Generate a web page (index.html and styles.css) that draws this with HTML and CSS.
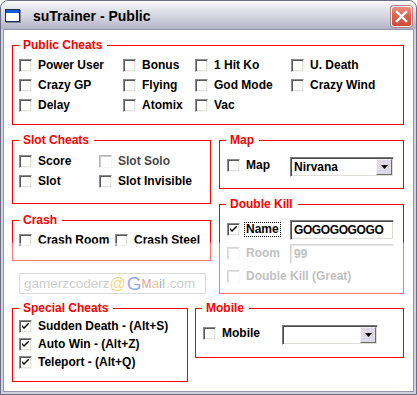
FILE: index.html
```html
<!DOCTYPE html>
<html>
<head>
<meta charset="utf-8">
<title>suTrainer - Public</title>
<link rel="stylesheet" href="styles.css">
</head>
<body>
<div class="window">
  <div class="titlebar">
    <svg class="appicon" width="16" height="14" viewBox="0 0 16 14">
      <rect x="0.5" y="0.5" width="14" height="12" fill="#fff" stroke="#1c2c5c"/>
      <rect x="1" y="1" width="13" height="3" fill="#1a5ad8"/>
      <rect x="15" y="1" width="1" height="13" fill="#808090"/>
      <rect x="1" y="13" width="15" height="1" fill="#808090"/>
    </svg>
    <span class="title">suTrainer - Public</span>
    <div class="close">
      <svg width="13" height="13" viewBox="0 0 13 13"><path d="M2 2 L11 11 M11 2 L2 11" stroke="#fff" stroke-width="2.4" stroke-linecap="square"/></svg>
    </div>
  </div>
  <div class="client">
    <fieldset class="grp public">
      <legend>Public Cheats</legend>
      <div class="body grid-public">
        <label class="opt"><span class="cb"></span>Power User</label>
        <label class="opt"><span class="cb"></span>Bonus</label>
        <label class="opt"><span class="cb"></span>1 Hit Ko</label>
        <label class="opt"><span class="cb"></span>U. Death</label>
        <label class="opt"><span class="cb"></span>Crazy GP</label>
        <label class="opt"><span class="cb"></span>Flying</label>
        <label class="opt"><span class="cb"></span>God Mode</label>
        <label class="opt"><span class="cb"></span>Crazy Wind</label>
        <label class="opt"><span class="cb"></span>Delay</label>
        <label class="opt"><span class="cb"></span>Atomix</label>
        <label class="opt"><span class="cb"></span>Vac</label>
      </div>
    </fieldset>

    <div class="middle">
      <div class="col left">
        <fieldset class="grp slot">
          <legend>Slot Cheats</legend>
          <div class="body grid-slot">
            <label class="opt"><span class="cb"></span>Score</label>
            <label class="opt dim"><span class="cb off"></span>Slot Solo</label>
            <label class="opt"><span class="cb"></span>Slot</label>
            <label class="opt"><span class="cb"></span>Slot Invisible</label>
          </div>
        </fieldset>
        <fieldset class="grp crash">
          <legend>Crash</legend>
          <div class="body grid-crash">
            <label class="opt"><span class="cb"></span>Crash Room</label>
            <label class="opt"><span class="cb"></span>Crash Steel</label>
          </div>
        </fieldset>
        <div class="watermark">
          <span class="wm-name">gamerzcoderz</span><span class="wm-at">@</span><span class="wm-g">G</span><span class="wm-m">M</span><span class="wm-a">a</span><span class="wm-i">i</span><span class="wm-l">l</span><span class="wm-com">.com</span>
        </div>
      </div>
      <div class="col right">
        <fieldset class="grp map">
          <legend>Map</legend>
          <div class="body rowwrap">
            <div class="opt line">
              <span class="cb"></span><span class="lbl w44">Map</span>
              <div class="combo w104"><span class="combo-text">Nirvana</span><span class="combo-btn"><svg width="7" height="4" viewBox="0 0 7 4"><path d="M0 0 H7 L3.5 4 Z" fill="#000"/></svg></span></div>
            </div>
          </div>
        </fieldset>
        <fieldset class="grp dk">
          <legend>Double Kill</legend>
          <div class="body dkrows">
            <div class="opt line">
              <span class="cb"><svg width="7" height="7" viewBox="0 0 7 7"><path d="M0 2 L2 4 L7 -1 L7 1 L2 6 L0 4 Z" fill="#000"/></svg></span><span class="lbl w44"><span class="focus">Name</span></span>
              <div class="edit w104">GOGOGOGOGO</div>
            </div>
            <div class="opt line dis r2">
              <span class="cb off"></span><span class="lbl w44">Room</span>
              <div class="edit w104 disabled">99</div>
            </div>
            <div class="opt line dis r3">
              <span class="cb off"></span><span class="lbl">Double Kill (Great)</span>
            </div>
          </div>
        </fieldset>
      </div>
    </div>

    <div class="bottom">
      <fieldset class="grp special">
        <legend>Special Cheats</legend>
        <div class="body sprows">
          <label class="opt sp"><span class="cb"><svg width="7" height="7" viewBox="0 0 7 7"><path d="M0 2 L2 4 L7 -1 L7 1 L2 6 L0 4 Z" fill="#000"/></svg></span>Sudden Death - (Alt+S)</label>
          <label class="opt sp"><span class="cb"><svg width="7" height="7" viewBox="0 0 7 7"><path d="M0 2 L2 4 L7 -1 L7 1 L2 6 L0 4 Z" fill="#000"/></svg></span>Auto Win - (Alt+Z)</label>
          <label class="opt sp"><span class="cb"><svg width="7" height="7" viewBox="0 0 7 7"><path d="M0 2 L2 4 L7 -1 L7 1 L2 6 L0 4 Z" fill="#000"/></svg></span>Teleport - (Alt+Q)</label>
        </div>
      </fieldset>
      <fieldset class="grp mobile">
        <legend>Mobile</legend>
        <div class="body rowwrap">
          <div class="opt line">
            <span class="cb"></span><span class="lbl w60">Mobile</span>
            <div class="combo w96"><span class="combo-text"></span><span class="combo-btn"><svg width="7" height="4" viewBox="0 0 7 4"><path d="M0 0 H7 L3.5 4 Z" fill="#000"/></svg></span></div>
          </div>
        </div>
      </fieldset>
    </div>

    <div class="fade"></div>
  </div>
</div>
</body>
</html>
```

FILE: styles.css
```css
* { box-sizing: border-box; }
html, body { margin: 0; padding: 0; background: #fff; }
body {
  font-family: "Liberation Sans", Arial, sans-serif;
  font-size: 12px;
  font-weight: bold;
  color: #000;
}

.window {
  width: 417px;
  height: 395px;
  border: 1px solid #6c6c84;
  border-radius: 8px 8px 0 0;
  background: #d2d2de;
  display: flex;
  flex-direction: column;
  overflow: hidden;
}

.titlebar {
  height: 28px;
  flex: none;
  display: flex;
  align-items: center;
  padding: 0 4px 0 4px;
  background: linear-gradient(#fcfcfe 0%, #e6e6ee 25%, #d2d2de 60%, #b2b2c6 100%);
}
.appicon { flex: none; margin-top: 2px; }
.title {
  flex: 1;
  margin-left: 12px;
  font-size: 14px;
  color: #000;
  margin-top: 1px;
}
.close {
  width: 21px;
  height: 21px;
  border: 1px solid #fff;
  border-radius: 3px;
  background: linear-gradient(#ec9484 0%, #dc624c 45%, #cc4c38 100%);
  box-shadow: 0 0 0 1px #b88080;
  display: flex;
  align-items: center;
  justify-content: center;
  margin-top: 2px;
}

.client {
  flex: 1;
  margin: 0 2px 2px;
  background: #fff;
  border: 1px solid #9494ac;
  position: relative;
  padding: 8px 0 0 8px;
}

/* group boxes */
.grp {
  margin: 0;
  padding: 0;
  border: 1px solid #ff0000;
  min-width: 0;
}
.grp legend {
  margin-left: 6px;
  padding: 0 5px 0 4px;
  color: #ff0000;
  font-size: 12px;
  line-height: 14px;
}

.opt {
  display: flex;
  align-items: center;
  height: 20px;
  white-space: nowrap;
}
.cb {
  flex: none;
  width: 13px;
  height: 13px;
  margin-right: 6px;
  background: #fff;
  border: 1px solid;
  border-color: #8a8a8a #f4f4f4 #f4f4f4 #8a8a8a;
  box-shadow: inset 1px 1px #5a5a5a, inset -1px -1px #e4e2dc;
  display: inline-flex;
  align-items: center;
  justify-content: center;
}
.cb.off {
  border-color: #b8b8b8 #f4f4f4 #f4f4f4 #b8b8b8;
  box-shadow: inset 1px 1px #c8c8c8;
}
.dim { color: #484848; }
.dis { color: #8c8c8c; }

.public { width: 392px; height: 87px; }
.grid-public {
  display: grid;
  grid-template-columns: 104px 72px 96px 1fr;
  grid-auto-rows: 20px;
  padding: 3px 0 0 6px;
}

.middle {
  display: flex;
  gap: 8px;
  margin-top: 8px;
  align-items: flex-start;
}
.col { display: flex; flex-direction: column; }
.left { width: 199px; }
.right { width: 185px; }

.slot { height: 71px; }
.grid-slot {
  display: grid;
  grid-template-columns: 80px 1fr;
  grid-auto-rows: 20px;
  padding: 4px 0 0 6px;
}
.crash { height: 48px; margin-top: 9px; }
.grid-crash {
  display: grid;
  grid-template-columns: 96px 1fr;
  grid-auto-rows: 20px;
  padding: 3px 0 0 6px;
}

.watermark {
  margin: 12px 0 0 7px;
  width: 187px;
  height: 21px;
  border: 1px solid #bcbcbc;
  display: flex;
  align-items: center;
  padding-left: 4px;
  font-family: "Liberation Sans", Arial, sans-serif;
  font-weight: normal;
  font-size: 13.5px;
  color: #a4a4a4;
  white-space: nowrap;
}
.wm-at { color: #f2b418; font-size: 16px; }
.wm-g { color: #3a6ad8; font-size: 19px; margin-left: 1px; }
.wm-m { color: #d84838; font-size: 12px; }
.wm-a { color: #e8a030; }
.wm-i { color: #3a6ad8; }
.wm-l { color: #38a848; margin-right: 1px; }
.wm-com { color: #a4a4a4; }

.map { height: 56px; }
.rowwrap { padding: 8px 0 0 7px; }
.lbl { flex: none; }
.w44 { width: 44px; }
.w60 { width: 60px; }

.combo {
  height: 20px;
  margin-top: 4px;
  border: 1px solid;
  border-color: #7c7c7c #ffffff #ffffff #7c7c7c;
  box-shadow: inset 1px 1px #4a4a4a, inset -1px -1px #e0ded8;
  display: flex;
  align-items: stretch;
  padding: 1px;
  background: #fff;
}
.w104 { width: 104px; }
.w96 { width: 96px; }
.combo-text {
  flex: 1;
  padding-left: 2px;
  line-height: 16px;
}
.combo-btn {
  width: 16px;
  flex: none;
  background: #ddd9e6;
  border: 1px solid;
  border-color: #f4f2f8 #6c6c6c #6c6c6c #f4f2f8;
  display: flex;
  align-items: center;
  justify-content: center;
}

.dk { height: 97px; margin-top: 8px; }
.dkrows { padding: 8px 0 0 7px; }
.dkrows .r2 { margin-top: 4px; }
.dkrows .r3 { margin-top: 3px; }
.focus {
  border: 1px dotted #000;
  padding: 0 1px;
  margin-left: -2px;
  line-height: 13px;
  display: inline-block;
}
.edit {
  height: 20px;
  margin-top: 2px;
  border: 1px solid;
  border-color: #7c7c7c #ffffff #ffffff #7c7c7c;
  box-shadow: inset 1px 1px #4a4a4a, inset -1px -1px #e0ded8;
  padding-left: 3px;
  line-height: 18px;
  letter-spacing: -0.4px;
  background: #fff;
}
.edit.disabled {
  border-color: #b4b4b4 #ffffff #ffffff #b4b4b4;
  box-shadow: inset 1px 1px #d0d0d0;
  color: #8c8c8c;
  letter-spacing: 0;
}

.bottom {
  display: flex;
  gap: 7px;
  margin-top: 7px;
  align-items: flex-start;
}
.special { width: 176px; height: 81px; }
.sprows { padding: 2px 0 0 6px; }
.opt.sp { height: 18px; }
.mobile { width: 209px; height: 57px; }

.fade {
  position: absolute;
  left: 0;
  right: 0;
  top: 213px;
  height: 55px;
  background: rgba(255, 255, 255, 0.45);
  pointer-events: none;
}
```
